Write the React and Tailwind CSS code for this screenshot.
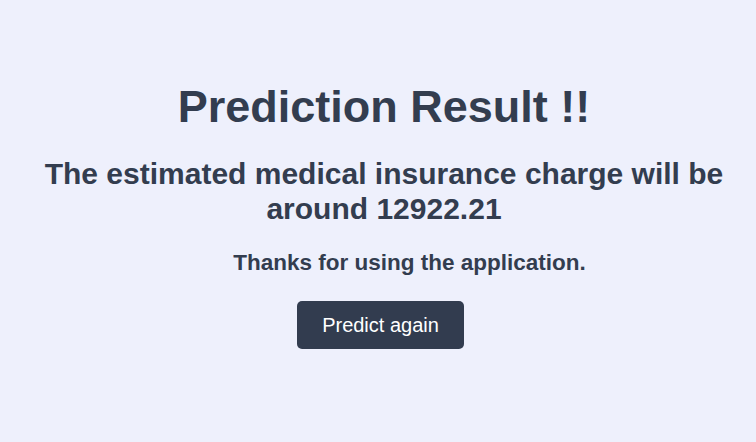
export default function App() {
  return (
    <div
      className="min-h-[442px] w-full bg-[#eef0fc] pl-[12px] text-[#333d4f] flex flex-col items-center"
      style={{ fontFamily: '"Liberation Sans", Arial, sans-serif' }}
    >
      <h1 className="mt-[80px] text-[45px] leading-[54px] font-bold">Prediction Result !!</h1>
      <h2 className="mt-[22px] text-center text-[30px] leading-[35px] font-bold">
        The estimated medical insurance charge will be around 12922.21
      </h2>
      <p className="mt-[23px] ml-[51px] text-[22.5px] leading-[28px] font-bold">Thanks for using the application.</p>
      <button className="mt-[24px] -ml-[7px] h-[48px] w-[167px] rounded-[5px] bg-[#323c4f] text-[20px] text-white">
        Predict again
      </button>
    </div>
  );
}
